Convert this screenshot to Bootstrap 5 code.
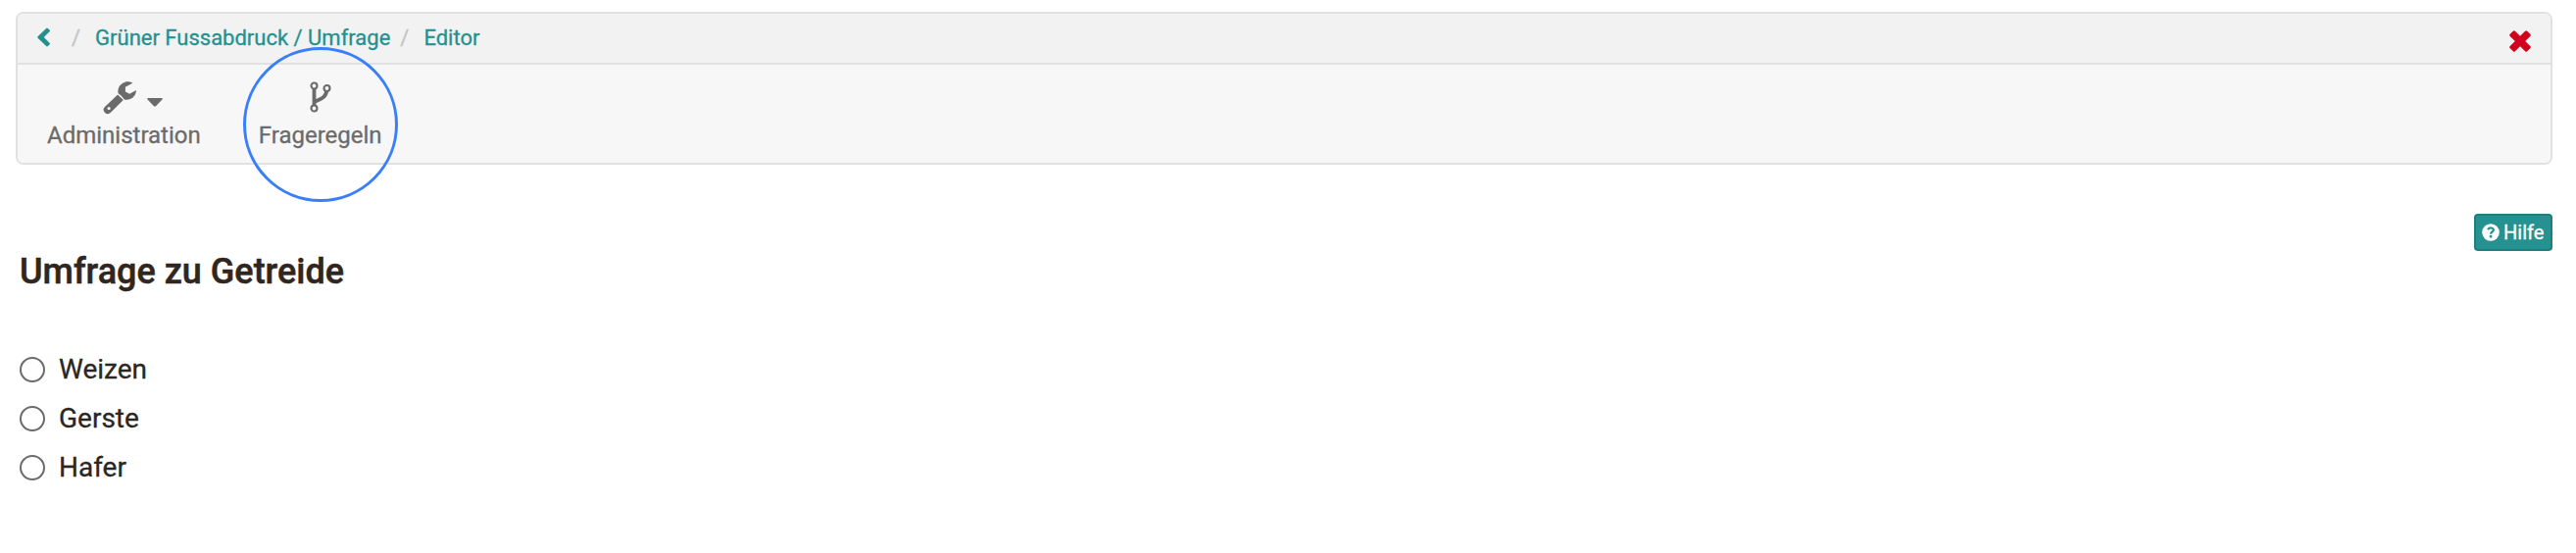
<!DOCTYPE html>
<html lang="de">
<head>
<meta charset="utf-8">
<meta name="viewport" content="width=device-width, initial-scale=1">
<title>Umfrage Editor</title>
<link href="https://cdn.jsdelivr.net/npm/bootstrap@5.3.0/dist/css/bootstrap.min.css" rel="stylesheet">
<style>
  body { font-family: Roboto, sans-serif; color: #2b2622; background: #fff; padding: 12px 24px 0 16px; -webkit-text-stroke: .3px currentColor; }
  svg { display: block; flex: none; }
  .panel { --bs-card-border-color: #e1e1e1; --bs-card-border-width: 2px; --bs-card-border-radius: 8px; --bs-card-inner-border-radius: 6px; height: 156px; }
  .crumbs { height: 52px; padding: 0 20px; background: #f2f2f2; border-bottom: 2px solid #e1e1e1; }
  .crumbs .breadcrumb { font-size: 22px; line-height: 50px; height: 50px; }
  .crumbs a { color: #239190; text-decoration: none; }
  .chevron { margin-top: -3px; }
  .close-link { margin-top: 17px; }
  .slash { color: #c4c4c4; margin: 0 15px 0 10px; }
  .slash-first { margin-left: 21px; }
  .tools { height: 100px; background: #f7f7f7; padding: 15px 0 0 30px; gap: 59px; border-radius: 0 0 6px 6px; }
  .tool { color: #6b6b6b; font-size: 24px; line-height: 31px; text-decoration: none; }
  .tool-icon { height: 42px; padding-top: 2px; }
  .with-caret { gap: 11px; margin-left: 18px; }
  .caret-down { margin-top: 17px; }
  .ring { position: absolute; left: 50%; top: 46px; width: 158px; height: 158px; margin: -79px 0 0 -79px; border: 3px solid #397ffb; border-radius: 50%; }
  .help { --bs-btn-bg: #259190; --bs-btn-border-color: #1f7f7d; --bs-btn-color: #fff; --bs-btn-font-size: 20px; --bs-btn-line-height: 35px; --bs-btn-padding-x: 6px; --bs-btn-padding-y: 0; --bs-btn-border-width: 2px; --bs-btn-border-radius: 4px; width: 80px; height: 38px; margin-top: 50px; gap: 4px; }
  .title { font-size: 36px; line-height: 44px; font-weight: 500; margin: -1px 0 0 4px; color: #302620; -webkit-text-stroke-width: .5px; }
  .choices { margin: 53px 0 0 4px; }
  .choice { height: 50px; font-size: 28px; line-height: 50px; gap: 14px; }
  .choice .form-check-input { width: 26px; height: 26px; border: 2px solid #6b6b6b; margin: 0; background-color: #fff; }
</style>
</head>
<body>
<header class="card panel">
  <nav class="crumbs d-flex justify-content-between align-items-start rounded-top">
    <div class="breadcrumb d-flex flex-nowrap mb-0">
      <a href="#" class="d-flex align-items-center" aria-label="Zurück">
        <svg class="chevron" width="14" height="20" viewBox="0 0 14 20"><path d="M9.1.9a1.3 1.3 0 0 1 1.8 0l1.6 1.6a1.2 1.2 0 0 1 0 1.8L6.8 10l5.7 5.7a1.2 1.2 0 0 1 0 1.8l-1.600 1.600a1.300 1.300 0 0 1-1.800 0L.8 10.900a1.200 1.200 0 0 1 0-1.800Z" fill="currentColor"/></svg>
      </a>
      <span class="slash slash-first">/</span>
      <a href="#">Grüner Fussabdruck / Umfrage</a>
      <span class="slash">/</span>
      <a href="#">Editor</a>
    </div>
    <a href="#" class="close-link" aria-label="Schliessen">
      <svg width="22" height="22" viewBox="0 0 22 22"><path d="M3.8.7a1.5 1.5 0 0 1 2.1 0L11 5.8 16.1.7a1.5 1.5 0 0 1 2.1 0l3.1 3.1a1.5 1.5 0 0 1 0 2.1L16.2 11l5.1 5.1a1.5 1.5 0 0 1 0 2.1l-3.1 3.1a1.5 1.5 0 0 1-2.1 0L11 16.2l-5.1 5.1a1.5 1.5 0 0 1-2.1 0L.7 18.2a1.5 1.5 0 0 1 0-2.1L5.8 11 .7 5.9a1.5 1.5 0 0 1 0-2.1Z" fill="#d1021d"/></svg>
    </a>
  </nav>
  <div class="tools d-flex">
    <a href="#" class="tool d-flex flex-column align-items-center">
      <span class="tool-icon with-caret d-flex">
        <svg width="34" height="34" viewBox="0 0 34 34"><path fill="currentColor" fill-rule="evenodd" d="M15.1 13.4 20.8 19.1 8.2 31.6Q5.1 34.7 2 31.9-.9 28.9 1.9 26ZM6.1 25.9a1.6 1.6 0 1 0 0 3.2 1.6 1.6 0 0 0 0-3.2Z"/><path fill="currentColor" d="M30.1 1.4C27.8.3 25.1 0 22.6.8 17.6 2.4 14.6 7 15.6 12.2c.9.2 6.1 5.3 6.2 6.2 5.1 1 9.7-1.3 11.5-5.9.3-.9.6-2.1.5-2.9-.1-.4-.5-.4-.8-.2l-5.8 3.4-4.3-2.3V5.7l6.9-3.8c.3-.1.4-.4.3-.5Z"/></svg>
        <svg class="caret-down" width="16" height="9" viewBox="0 0 16 9"><path fill="currentColor" d="M1.2 0H14.8Q16.4.3 15.5 1.5L9 8.2Q8 9 7 8.2L.5 1.5Q-.4.3 1.2 0Z"/></svg>
      </span>
      <span>Administration</span>
    </a>
    <a href="#" class="tool position-relative d-flex flex-column align-items-center">
      <span class="tool-icon">
        <svg width="22" height="32" viewBox="0 0 22 32"><g fill="none" stroke="currentColor"><path stroke-width="3.8" d="M4.5 6.5v19M4.5 23V21.5C6 18.600 16.500 18.900 17.200 9.500"/><g stroke-width="2.1" fill="#f7f7f7"><circle cx="4.500" cy="4.500" r="3"/><circle cx="17.500" cy="7" r="3"/><circle cx="4.500" cy="27.500" r="3"/></g></g></svg>
      </span>
      <span>Frageregeln</span>
      <span class="ring"></span>
    </a>
  </div>
</header>
<main>
  <div class="d-flex justify-content-end">
    <button type="button" class="btn help d-flex align-items-center">
      <svg width="18" height="18" viewBox="0 0 18 18"><circle cx="9" cy="9" r="8.8" fill="#fff"/><path d="M6.1 6.3C7.300 3.600 12 4 11.800 6.700 11.700 8.500 9.100 8.500 9.100 10.700" fill="none" stroke="#259190" stroke-width="2.2"/><rect x="7.8" y="12" width="2.5" height="2.5" rx=".4" fill="#259190"/></svg>
      <span>Hilfe</span>
    </button>
  </div>
  <h1 class="title">Umfrage zu Getreide</h1>
  <div class="choices">
    <label class="choice d-flex align-items-center"><input class="form-check-input" type="radio" name="getreide"><span>Weizen</span></label>
    <label class="choice d-flex align-items-center"><input class="form-check-input" type="radio" name="getreide"><span>Gerste</span></label>
    <label class="choice d-flex align-items-center"><input class="form-check-input" type="radio" name="getreide"><span>Hafer</span></label>
  </div>
</main>
<script src="https://cdn.jsdelivr.net/npm/bootstrap@5.3.0/dist/js/bootstrap.bundle.min.js"></script>
</body>
</html>
